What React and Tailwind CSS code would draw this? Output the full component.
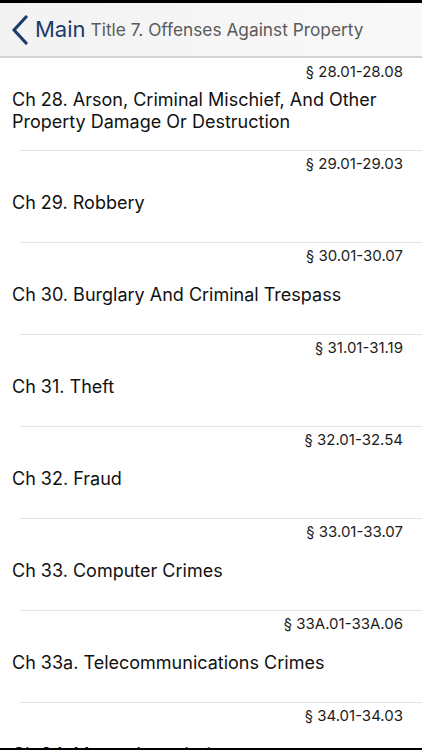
import React from "react";

const chapters = [
  { range: "§ 28.01-28.08", title: "Ch 28. Arson, Criminal Mischief, And Other Property Damage Or Destruction" },
  { range: "§ 29.01-29.03", title: "Ch 29. Robbery" },
  { range: "§ 30.01-30.07", title: "Ch 30. Burglary And Criminal Trespass" },
  { range: "§ 31.01-31.19", title: "Ch 31. Theft" },
  { range: "§ 32.01-32.54", title: "Ch 32. Fraud" },
  { range: "§ 33.01-33.07", title: "Ch 33. Computer Crimes" },
  { range: "§ 33A.01-33A.06", title: "Ch 33a. Telecommunications Crimes" },
  { range: "§ 34.01-34.03", title: "Ch 34. Money Laundering" },
];

function ChapterRow({ range, title, first }) {
  return (
    <div className="h-[92px] shrink-0 flex flex-col">
      {first ? <div className="h-px" /> : <div className="ml-5 h-px bg-[#e3e3e3]" />}
      <div className="h-6 flex items-center justify-end pr-[19px] pt-[3px] text-[15px] text-[#1c1c1c]">
        {range}
      </div>
      <div className="h-14 flex items-center px-3">
        <span className="text-[18px] leading-[22px] text-[#111]">{title}</span>
      </div>
    </div>
  );
}

export default function App() {
  return (
    <div
      className="w-[422px] h-[750px] flex flex-col overflow-hidden bg-white"
      style={{ fontFamily: "Inter, 'Noto Sans', sans-serif" }}
    >
      <div className="h-[3px] bg-black shrink-0" />
      <div className="h-[55px] shrink-0 flex items-center bg-gradient-to-r from-[#f2f2f3] to-[#f9f9f9] border-b-2 border-[#d2d2d2]">
        <svg width="18" height="30" viewBox="0 0 18 30" className="ml-[11px]">
          <path d="M15 2 L3 15 L15 28" fill="none" stroke="#1c3b6b" strokeWidth="3.2" strokeLinecap="round" strokeLinejoin="round" />
        </svg>
        <span className="ml-[6px] text-[22px] text-[#1c3b6b]">Main</span>
        <span className="ml-[5px] text-[17.3px] text-[#5a5a5a]">Title 7. Offenses Against Property</span>
      </div>
      <div className="flex-1 flex flex-col overflow-hidden">
        {chapters.map((c, i) => (
          <ChapterRow key={c.range} {...c} first={i === 0} />
        ))}
      </div>
      <div className="h-[2px] bg-black shrink-0" />
    </div>
  );
}
